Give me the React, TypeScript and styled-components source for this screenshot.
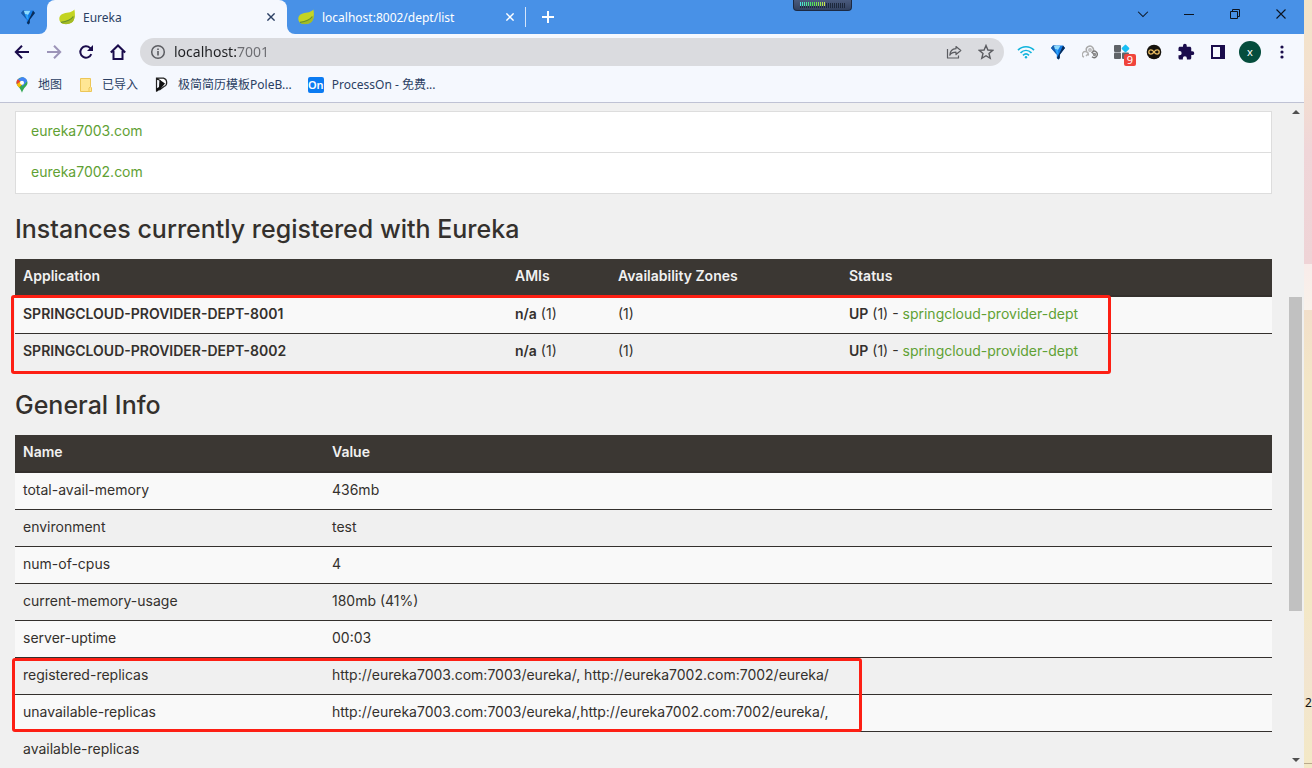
import React from "react";
import styled, { createGlobalStyle } from "styled-components";

const GlobalStyle = createGlobalStyle`
  *, *::before, *::after { box-sizing: border-box; }
  body { margin: 0; overflow: hidden; }
  button { font: inherit; color: inherit; padding: 0; border: 0; background: none; }
  svg { display: block; flex: none; }
`;

const uiFont = `"Noto Sans", "Noto Sans CJK SC", sans-serif`;
const pageFont = `Inter, sans-serif`;

const Screen = styled.div`
  display: grid;
  grid-template-columns: minmax(0, 1fr) 8px;
  height: 100vh;
`;

const Desktop = styled.aside`
  overflow: hidden;
  background: linear-gradient(
    to bottom,
    #f3e4c8 0, #f3e0cf 80px, #f0d5d8 150px, #efd3d6 264px,
    #f8ecea 264px, #f9f1ea 310px,
    #f2dfca 310px, #f3e6c6 380px, #f3e8c4 600px, #f2e4d0 660px, #f3e8c6 763px,
    #b9a98c 763px, #b9a98c 764px, #f3e8c6 764px
  );
  padding: 695px 0 0 1px;
  font: 12px/16px ${uiFont};
  color: #111;
`;

const Browser = styled.div`
  display: flex;
  flex-direction: column;
  min-width: 0;
  min-height: 0;
  background: #f5f8fe;
  color: #2b3f63;
  font: 12px/16px ${uiFont};
`;

const TabStrip = styled.div`
  position: relative;
  display: flex;
  align-items: center;
  height: 34px;
  background: #4891e7;
  color: #fff;
`;

const PinnedTab = styled.div`
  display: flex;
  align-items: center;
  justify-content: flex-end;
  width: 47px;
  height: 34px;
  padding-right: 11px;
  background: #4891e7;
  border-bottom-right-radius: 8px;
`;

const TabGround = styled.div`
  display: flex;
  background: #f5f8fe;
`;

const TabGroundRest = styled.div`
  display: flex;
  background: linear-gradient(to right, #f5f8fe 16px, #4891e7 16px);
`;

const Tab = styled.div<{ $active?: boolean }>`
  display: flex;
  align-items: center;
  gap: 8px;
  width: ${(p) => (p.$active ? "240px" : "238px")};
  height: 34px;
  padding: ${(p) => (p.$active ? "0 10px 0 12px" : "0 9px 0 11px")};
  background: ${(p) => (p.$active ? "#f5f8fe" : "#4891e7")};
  color: ${(p) => (p.$active ? "#2b3f63" : "#fff")};
  border-radius: ${(p) => (p.$active ? "8px 8px 0 0" : "0 0 0 8px")};
`;

const ActiveBacking = styled.div`
  background: #4891e7;
`;

const TabTitle = styled.span`
  flex: 1;
  padding-top: 2px;
  white-space: nowrap;
`;

const TabDivider = styled.span`
  width: 1px;
  height: 20px;
  background: #d5e5fa;
`;

const IconButton = styled.button<{ $w: number; $h?: number }>`
  display: flex;
  align-items: center;
  justify-content: center;
  flex: none;
  position: relative;
  width: ${(p) => p.$w}px;
  height: ${(p) => p.$h ?? p.$w}px;
`;

const WindowControls = styled.div`
  display: flex;
  align-self: flex-start;
  margin-left: auto;
  color: #0c1420;
`;

const Meter = styled.div`
  position: absolute;
  left: 793px;
  top: 0;
  width: 59px;
  height: 11px;
  padding: 2px 6px;
  background: linear-gradient(#4a5b7e, #33425f);
  border: 1px solid #1c2942;
  border-top: 0;
  border-radius: 0 0 4px 4px;
`;

const Toolbar = styled.div`
  display: flex;
  align-items: center;
  height: 36px;
  padding: 0 6px;
  color: #1a0c4c;
`;

const Omnibox = styled.label`
  display: flex;
  align-items: center;
  flex: 1;
  min-width: 0;
  height: 28px;
  margin: 0 6px;
  padding: 0 10px;
  gap: 8px;
  border-radius: 14px;
  background: #dadbdf;
  color: #5b5c61;
`;

const Address = styled.input`
  flex: 1;
  min-width: 0;
  height: 24px;
  padding: 0 0 2px;
  border: 0;
  outline: 0;
  font: 14px/20px ${uiFont};
  color: transparent;
  background: linear-gradient(to right, #202124 63px, #6b6c71 63px);
  background-clip: text;
  -webkit-background-clip: text;
`;

const Avatar = styled.span`
  display: flex;
  align-items: center;
  justify-content: center;
  width: 22px;
  height: 22px;
  border-radius: 50%;
  background: #054d3d;
  color: #fff;
  font-size: 11px;
`;

const Badge = styled.span`
  position: absolute;
  left: 18px;
  top: 18px;
  width: 12px;
  height: 12px;
  border-radius: 2px;
  background: #f0443c;
  color: #fff;
  font-size: 11px;
  line-height: 12px;
  text-align: center;
`;

const Bookmarks = styled.nav`
  display: flex;
  align-items: center;
  gap: 16px;
  height: 33px;
  padding: 0 14px 3px;
  border-bottom: 1px solid #bfc2d4;
`;

const Bookmark = styled.a`
  display: flex;
  align-items: center;
  gap: 8px;
  color: #2b3f63;
  text-decoration: none;
  white-space: nowrap;
`;

const Viewport = styled.div`
  display: flex;
  flex: 1;
  min-height: 0;
  overflow: hidden;
  background: #f0f0f0;
`;

const Page = styled.main`
  flex: 1;
  min-width: 0;
  padding: 8px 15px;
  font: 14px/20px ${pageFont};
  color: #34302d;
`;

const ReplicaList = styled.ul`
  margin: 0;
  padding: 0;
  list-style: none;
  background: #fff;
  border: 1px solid #ddd;
`;

const ReplicaItem = styled.li`
  padding: 9px 15px 11px;
  & + & { border-top: 1px solid #ddd; }
`;

const PageLink = styled.a`
  color: #5fa134;
  text-decoration: none;
`;

const Heading = styled.h1`
  margin: 0;
  padding: 20px 0 15px;
  font: 500 25px/30px ${pageFont};
`;

const TableArea = styled.div`
  position: relative;
`;

const DataTable = styled.table`
  width: 100%;
  table-layout: fixed;
  border-collapse: separate;
  border-spacing: 0;

  th, td {
    padding: 7px 8px 9px;
    text-align: left;
    white-space: nowrap;
  }
  th, b { font-weight: 600; }
  th {
    background: #3b3733;
    color: #f1f1f1;
    border-bottom: 2px solid #34302d;
  }
  tbody tr:nth-child(odd) { background: #f9f9f9; }
  tbody tr + tr td { border-top: 1px solid #34302d; }
`;

const Column = styled.col<{ $w?: number }>`
  width: ${(p) => (p.$w ? `${p.$w}px` : "auto")};
`;

const Highlight = styled.div<{ $top: number; $left: number; $w: number; $h: number }>`
  position: absolute;
  top: ${(p) => p.$top}px;
  left: ${(p) => p.$left}px;
  width: ${(p) => p.$w}px;
  height: ${(p) => p.$h}px;
  border: 3px solid #fd1f14;
  border-radius: 3px;
  pointer-events: none;
`;

const Scrollbar = styled.div`
  display: flex;
  flex-direction: column;
  flex: none;
  width: 17px;
  padding: 0 2px;
  color: #505050;
`;

const TrackPart = styled.div<{ $grow: number; $thumb?: boolean }>`
  flex: ${(p) => p.$grow} 0 0;
  background: ${(p) => (p.$thumb ? "#c1c1c1" : "transparent")};
`;

const Leaf = () => (
  <svg width="16" height="16" viewBox="0 0 16 16">
    <path d="M15.400.6C16.500 6 16 11 12.500 13.500 9 15.800 3.500 15.600 1.300 13 -.6 10 .2 6.500 3.500 5 7 3.400 12 4.500 15.400.6Z" fill="#c3d422" />
    <path d="M1.500 13.200C7 13.300 12.500 11.500 15.700 6 15.700 10 14.600 12.600 12.500 13.800 9 15.800 3.500 15.600 1.500 13.200Z" fill="#a3bb25" />
    <path d="M2 13.400C7.500 12.600 11.500 11.500 14.300 7.500" fill="none" stroke="#66912b" strokeWidth="1.100" />
  </svg>
);

const Gem = () => (
  <svg width="16" height="16" viewBox="0 0 16 16">
    <path d="M1 4 3 1.500H13L15 4 9.800 10.800V14L8.500 15.500 6.800 14V10.800Z" fill="#127be6" />
    <path d="M1 4 3 1.500H5.500L4.500 5 6.800 10.800Z" fill="#1a5ca8" />
    <path d="M3.800 1.800H10.500L8 6 5 5Z" fill="#8edcff" />
    <path d="M5 5 8 6 8.500 10.500 7 10Z" fill="#2aa2fa" />
    <path d="M13 1.500 15 4 9.800 10.800V14L8.500 15.500 6.800 14 8.500 11 11.500 5Z" fill="#0b2c58" />
  </svg>
);

const Cross = ({ size = 8, width = 1.4 }: { size?: number; width?: number }) => (
  <svg width={size} height={size} viewBox="0 0 8 8" fill="none" stroke="currentColor" strokeWidth={width}>
    <path d="M.4.4 7.600 7.600M7.600.4.4 7.600" />
  </svg>
);

const Stroke = ({ d, w = 2, size = 16 }: { d: string; w?: number; size?: number }) => (
  <svg width={size} height={size} viewBox="0 0 16 16" fill="none" stroke="currentColor" strokeWidth={w}>
    <path d={d} />
  </svg>
);

const LevelBars = () => (
  <svg width="46" height="7" viewBox="0 0 46 7">
    {Array.from({ length: 23 }, (_, i) => (
      <rect key={i} x={i * 2} y={i < 13 ? 0 : 1} width="1" height={i < 13 ? 4 : 5} fill={i < 13 ? `hsl(${178 - i * 9} 75% 60%)` : "#1d283c"} />
    ))}
    {Array.from({ length: 13 }, (_, i) => (
      <rect key={i} x={i * 2} y="4" width="1" height="2" fill="#1d283c" />
    ))}
  </svg>
);

const Wifi = () => (
  <svg width="18" height="16" viewBox="0 0 18 16" fill="none" stroke="#10b4dc" strokeWidth="1.700">
    <path d="M1 6.200C5.500 1.600 12.500 1.600 17 6.200M3.500 8.800C6.800 5.700 11.200 5.700 14.500 8.800M6 11.300C7.800 9.600 10.200 9.600 12 11.300" />
    <circle cx="9" cy="13.200" r="1.200" fill="#10b4dc" stroke="none" />
  </svg>
);

const Rings = () => (
  <svg width="16" height="16" viewBox="0 0 16 16" fill="none" strokeWidth="1.400">
    <path d="M4.600 7.200A3.600 3.600 0 1 1 10.500 8.200" stroke="#a9a9a9" />
    <circle cx="8" cy="6" r="1.200" stroke="#b5b5b5" />
    <path d="M2 13.200A3 3 0 1 1 6.200 11.500M4 12 6 10" stroke="#b0b0b0" />
    <path d="M9.500 8 12.500 10.500M10.500 7.500A3.200 3.200 0 1 1 10 12.800" stroke="#777" />
    <circle cx="12.500" cy="10.500" r="1" stroke="#8a8a8a" />
  </svg>
);

const Blocks = () => (
  <svg width="16" height="16" viewBox="0 0 16 16" fill="#5f6368">
    <rect x="0" y="1" width="7" height="7" rx="1" />
    <rect x="0" y="8.500" width="7" height="6.500" rx="1" />
    <rect x="8" y="8.500" width="7" height="6.500" rx="1" />
    <rect x="8.500" y="1.500" width="6" height="6" rx="1" fill="#18bff5" transform="rotate(45 11.500 4.500)" />
  </svg>
);

const Infinity8 = () => (
  <svg width="16" height="16" viewBox="0 0 16 16" fill="none">
    <circle cx="8" cy="8" r="7.300" fill="#15120d" />
    <path d="M8 8C6.800 6.300 6 5.900 4.900 5.900A2.100 2.100 0 1 0 4.900 10.100C6 10.100 6.800 9.600 8 8 9.200 6.300 10 5.900 11.100 5.900A2.100 2.100 0 1 1 11.100 10.100C10 10.100 9.200 9.600 8 8Z" stroke="#e9bd62" strokeWidth="1.300" />
  </svg>
);

const Puzzle = () => (
  <svg width="18" height="18" viewBox="0 0 24 24" fill="currentColor">
    <path d="M20.500 11H19V7c0-1.100-.9-2-2-2h-4V3.500a2.500 2.500 0 0 0-5 0V5H4c-1.100 0-2 .9-2 2v3.800h1.500a2.700 2.700 0 0 1 0 5.400H2V20c0 1.100.9 2 2 2h3.800v-1.500a2.700 2.700 0 0 1 5.400 0V22H17c1.100 0 2-.9 2-2v-4h1.500a2.500 2.500 0 0 0 0-5Z" />
  </svg>
);

const SidePanel = () => (
  <svg width="14" height="14" viewBox="0 0 14 14" fill="none">
    <path d="M1 1H13V13H1Z" stroke="currentColor" strokeWidth="2" />
    <path d="M9 1H13V13H9Z" fill="currentColor" />
  </svg>
);

const Dots = () => (
  <svg width="4" height="14" viewBox="0 0 4 14" fill="currentColor">
    <circle cx="2" cy="2" r="1.600" /><circle cx="2" cy="7" r="1.600" /><circle cx="2" cy="12" r="1.600" />
  </svg>
);

const Info = () => (
  <svg width="16" height="16" viewBox="0 0 16 16" fill="none" stroke="currentColor" strokeWidth="1.500">
    <circle cx="8" cy="8" r="6.300" />
    <path d="M8 7V11.500M8 4.500V6" strokeWidth="1.600" />
  </svg>
);

const Share = () => (
  <svg width="16" height="16" viewBox="0 0 16 16" fill="none" stroke="currentColor" strokeWidth="1.200" strokeLinejoin="round">
    <path d="M1.500 5V14H12.500V11.500" />
    <path d="M10 2.500 14.800 6.500 10 10.500V8.200C7 8.200 5 9.200 3.800 11.200 4 7.500 6 5 10 4.700Z" />
  </svg>
);

const Reload = () => (
  <svg width="16" height="16" viewBox="0 0 16 16" fill="none">
    <path d="M13.300 10.200A5.700 5.700 0 1 1 12 3.900L13.200 5.300" stroke="currentColor" strokeWidth="2" />
    <path d="M15 1V7H9Z" fill="currentColor" />
  </svg>
);

const MapPin = () => (
  <svg width="16" height="16" viewBox="0 0 16 16">
    <path d="M8 .3A5.500 5.500 0 0 1 13.500 5.800C13.500 9 9.500 10.500 8 15.800 6.500 10.500 2.500 9 2.500 5.800A5.500 5.500 0 0 1 8 .3Z" fill="#34a853" />
    <path d="M8 .3A5.500 5.500 0 0 1 13.200 4.200L8.500 9.500 6 4Z" fill="#4285f4" />
    <path d="M8 .3 3.700 2.300 7 5.500 10.500 1Z" fill="#4285f4" />
    <path d="M3.700 2.300C2.400 3.800 2.200 5.500 2.800 7.300L7 5Z" fill="#ea4335" />
    <path d="M2.800 7.300C3.300 8.800 4.300 9.700 5.200 10.600L10 5.800 7 4Z" fill="#fbbc04" />
    <circle cx="8" cy="5.700" r="2" fill="#fff" />
  </svg>
);

const Folder = () => (
  <svg width="16" height="16" viewBox="0 0 16 16">
    <path d="M2.500 1.500H12.500V9.500L13.500 11V14.500H2.500Z" fill="#ffe694" stroke="#ecc658" />
    <path d="M11 14.500V11L12.500 9.500" fill="none" stroke="#ecc658" />
  </svg>
);

const PoleLogo = () => (
  <svg width="16" height="16" viewBox="0 0 16 16">
    <path d="M2.500 14.500V1.200H9.500A4.400 4.400 0 0 1 10 9.500L6 12.500V3.500L2.500 1.200" fill="#fff" stroke="#222" strokeWidth="1.200" />
    <path d="M6 3 11 6.500 6 12.500 2.500 15V11.500L5 10Z" fill="#111" />
  </svg>
);

const OnLogo = styled.span`
  width: 16px;
  height: 16px;
  border-radius: 2px;
  background: #0b7bf2;
  color: #fff;
  font-size: 11px;
  font-weight: 600;
  line-height: 16px;
  text-align: center;
`;

const Triangle = ({ d }: { d: string }) => (
  <svg width="8" height="4" viewBox="0 0 8 4" fill="currentColor">
    <path d={d} />
  </svg>
);

const extensions = [
  { label: "Network", icon: <Wifi /> },
  { label: "Gem", icon: <Gem /> },
  { label: "Rings", icon: <Rings /> },
  { label: "Blocks", icon: <Blocks />, badge: "9" },
  { label: "Infinity", icon: <Infinity8 /> },
  { label: "Extensions", icon: <Puzzle /> },
  { label: "Side panel", icon: <SidePanel /> },
  { label: "Profile", icon: <Avatar>x</Avatar> },
  { label: "Menu", icon: <Dots /> },
];

const bookmarks = [
  { label: "地图", icon: <MapPin /> },
  { label: "已导入", icon: <Folder /> },
  { label: "极简简历模板PoleB...", icon: <PoleLogo /> },
  { label: "ProcessOn - 免费...", icon: <OnLogo>On</OnLogo> },
];

const instances = ["SPRINGCLOUD-PROVIDER-DEPT-8001", "SPRINGCLOUD-PROVIDER-DEPT-8002"];

const info = [
  ["total-avail-memory", "436mb"],
  ["environment", "test"],
  ["num-of-cpus", "4"],
  ["current-memory-usage", "180mb (41%)"],
  ["server-uptime", "00:03"],
  ["registered-replicas", "http://eureka7003.com:7003/eureka/, http://eureka7002.com:7002/eureka/"],
  ["unavailable-replicas", "http://eureka7003.com:7003/eureka/,http://eureka7002.com:7002/eureka/,"],
  ["available-replicas", ""],
];

export default function App() {
  return (
    <Screen>
      <GlobalStyle />
      <Browser>
        <TabStrip>
          <TabGround><PinnedTab><Gem /></PinnedTab></TabGround>
          <ActiveBacking>
            <Tab $active>
              <Leaf />
              <TabTitle>Eureka</TabTitle>
              <IconButton $w={12} aria-label="Close tab"><Cross /></IconButton>
            </Tab>
          </ActiveBacking>
          <TabGroundRest>
            <Tab>
              <Leaf />
              <TabTitle>localhost:8002/dept/list</TabTitle>
              <IconButton $w={12} aria-label="Close tab"><Cross /></IconButton>
            </Tab>
          </TabGroundRest>
          <TabDivider />
          <IconButton $w={44} $h={34} aria-label="New tab"><Stroke size={12} w={2.600} d="M8 0V16M0 8H16" /></IconButton>
          <Meter><LevelBars /></Meter>
          <WindowControls>
            <IconButton $w={46} $h={28} aria-label="Search tabs"><Stroke size={12} w={1.400} d="M1.500 5 8 11.500 14.500 5" /></IconButton>
            <IconButton $w={46} $h={28} aria-label="Minimize"><Stroke size={10} w={1.600} d="M0 8.800H16" /></IconButton>
            <IconButton $w={46} $h={28} aria-label="Restore"><Stroke size={10} w={1.600} d="M.8 4H12V15.200H.8ZM4 4V.8H15.200V12H12" /></IconButton>
            <IconButton $w={46} $h={28} aria-label="Close"><Cross size={10} width={0.9} /></IconButton>
          </WindowControls>
        </TabStrip>

        <Toolbar>
          <IconButton $w={32} aria-label="Back"><Stroke d="M15 8H2M8 1.800 1.800 8 8 14.200" /></IconButton>
          <IconButton $w={32} aria-label="Forward" disabled><svg width="16" height="16" viewBox="0 0 16 16" fill="none" stroke="#9c94b8" strokeWidth="2"><path d="M1 8H14M8 1.800 14.200 8 8 14.200" /></svg></IconButton>
          <IconButton $w={32} aria-label="Reload"><Reload /></IconButton>
          <IconButton $w={32} aria-label="Home"><Stroke d="M.8 8.500 8 1.500 15.200 8.500M3.500 7V15H12.500V7" /></IconButton>
          <Omnibox>
            <Info />
            <Address aria-label="Address" defaultValue="localhost:7001" />
            <IconButton $w={32} $h={28} aria-label="Share"><Share /></IconButton>
            <IconButton $w={16} $h={28} aria-label="Bookmark">
              <Stroke w={1.400} d="M8 1.500 9.900 6 14.700 6.400 11 9.500 12.200 14.300 8 11.700 3.800 14.300 5 9.500 1.300 6.400 6.100 6Z" />
            </IconButton>
          </Omnibox>
          {extensions.map((e) => (
            <IconButton key={e.label} $w={32} aria-label={e.label}>
              {e.icon}
              {e.badge && <Badge>{e.badge}</Badge>}
            </IconButton>
          ))}
        </Toolbar>

        <Bookmarks>
          {bookmarks.map((b) => (
            <Bookmark key={b.label} href="#">{b.icon}{b.label}</Bookmark>
          ))}
        </Bookmarks>

        <Viewport>
          <Page>
            <ReplicaList>
              <ReplicaItem><PageLink href="#">eureka7003.com</PageLink></ReplicaItem>
              <ReplicaItem><PageLink href="#">eureka7002.com</PageLink></ReplicaItem>
            </ReplicaList>

            <Heading>Instances currently registered with Eureka</Heading>
            <TableArea>
              <DataTable>
                <colgroup><Column $w={492} /><Column $w={103} /><Column $w={231} /><Column /></colgroup>
                <thead><tr><th>Application</th><th>AMIs</th><th>Availability Zones</th><th>Status</th></tr></thead>
                <tbody>
                  {instances.map((name) => (
                    <tr key={name}>
                      <td><b>{name}</b></td>
                      <td><b>n/a</b> (1)</td>
                      <td>(1)</td>
                      <td><b>UP</b> (1) - <PageLink href="#">springcloud-provider-dept</PageLink></td>
                    </tr>
                  ))}
                </tbody>
              </DataTable>
              <Highlight $top={36} $left={-4} $w={1100} $h={79} />
            </TableArea>

            <Heading>General Info</Heading>
            <TableArea>
              <DataTable>
                <colgroup><Column $w={309} /><Column /></colgroup>
                <thead><tr><th>Name</th><th>Value</th></tr></thead>
                <tbody>
                  {info.map(([name, value]) => (
                    <tr key={name}><td>{name}</td><td>{value}</td></tr>
                  ))}
                </tbody>
              </DataTable>
              <Highlight $top={223} $left={-3} $w={850} $h={74} />
            </TableArea>
          </Page>
          <Scrollbar>
            <IconButton $w={13} $h={17} aria-label="Scroll up"><Triangle d="M4 0 8 4H0Z" /></IconButton>
            <TrackPart $grow={177} />
            <TrackPart $grow={314} $thumb />
            <TrackPart $grow={140} />
            <IconButton $w={13} $h={17} aria-label="Scroll down"><Triangle d="M4 4 8 0H0Z" /></IconButton>
          </Scrollbar>
        </Viewport>
      </Browser>
      <Desktop>2</Desktop>
    </Screen>
  );
}
